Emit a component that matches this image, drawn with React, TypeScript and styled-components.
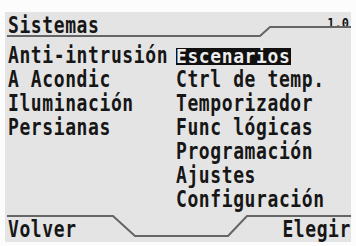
import React from "react"
import styled, { createGlobalStyle } from "styled-components"

const GlobalStyle = createGlobalStyle`
    html, body {
        margin: 0;
        padding: 0;
        background: #fcfcfc;
    }
`

const Page = styled.div`
    width: 356px;
    height: 246px;
    padding: 12px 0 0 5px;
    box-sizing: border-box;
`

const Screen = styled.div`
    position: relative;
    width: 346px;
    height: 230px;
    background: #e4e4e4;
    color: #161616;
    font-family: "DejaVu Sans Mono", "Liberation Mono", monospace;
    font-weight: bold;
    display: flex;
    flex-direction: column;
    overflow: hidden;
`

const Header = styled.div`
    position: relative;
    height: 32px;
    padding: 7px 2px 0 3px;
    box-sizing: border-box;
    display: flex;
    justify-content: space-between;
    align-items: flex-start;
`

// tall, narrow LCD lettering
const Label = styled.span`
    display: inline-block;
    height: 16px;
    font-size: 18px;
    line-height: 16px;
    letter-spacing: 0.6px;
    white-space: nowrap;
    transform: scaleY(1.25);
    transform-origin: 50% 14.2px;
`

const Version = styled.span`
    font-size: 12px;
    line-height: 14px;
    margin-top: -3px;
    transform: scaleY(1.15);
`

const Frame = styled.svg`
    position: absolute;
    left: 0;
    top: 0;
    pointer-events: none;
`

const Body = styled.div`
    flex: 1;
    display: grid;
    grid-template-columns: 168px 1fr;
    padding: 1px 0 0 3px;
`

const Column = styled.div`
    display: flex;
    flex-direction: column;
`

const Item = styled.div`
    height: 24px;
    padding-top: 4px;
    box-sizing: border-box;
`

const Highlight = styled.span`
    display: inline-block;
    height: 17px;
    padding-right: 1px;
    background: #101010;
    color: #ececec;
`

const HighlightText = styled.span`
    display: inline-block;
    font-size: 18px;
    line-height: 17px;
    letter-spacing: 0.6px;
    white-space: nowrap;
    transform: scaleY(1.12);
    transform-origin: 50% 14.7px;
`

const Footer = styled.div`
    position: relative;
    height: 30px;
    padding: 11px 0 0 3px;
    box-sizing: border-box;
    display: flex;
    justify-content: space-between;
    align-items: flex-start;
`

const left = ["Anti-intrusión", "A Acondic", "Iluminación", "Persianas"]
const right = [
    "Escenarios",
    "Ctrl de temp.",
    "Temporizador",
    "Func lógicas",
    "Programación",
    "Ajustes",
    "Configuración",
]

function App() {
    return (
        <Page>
            <GlobalStyle />
            <Screen>
                <Header>
                    <Label>Sistemas</Label>
                    <Version>1.0</Version>
                    <Frame width="346" height="32">
                        <polyline
                            points="2,24 255,24 265,15 346,15"
                            fill="none"
                            stroke="#656565"
                            strokeWidth="2"
                        />
                    </Frame>
                </Header>
                <Body>
                    <Column>
                        {left.map((t) => (
                            <Item key={t}>
                                <Label>{t}</Label>
                            </Item>
                        ))}
                    </Column>
                    <Column>
                        {right.map((t, i) => (
                            <Item key={t}>
                                {i === 0 ? (
                                    <Highlight>
                                        <HighlightText>{t}</HighlightText>
                                    </Highlight>
                                ) : (
                                    <Label>{t}</Label>
                                )}
                            </Item>
                        ))}
                    </Column>
                </Body>
                <Footer>
                    <Frame width="346" height="30">
                        <polyline
                            points="2,4 108,4 130,24 223,24 242,4 346,4"
                            fill="none"
                            stroke="#656565"
                            strokeWidth="2"
                        />
                    </Frame>
                    <Label>Volver</Label>
                    <Label>Elegir</Label>
                </Footer>
            </Screen>
        </Page>
    )
}

export default App
